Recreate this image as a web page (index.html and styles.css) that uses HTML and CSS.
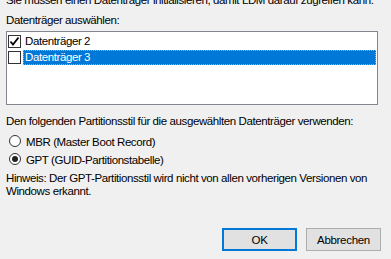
FILE: index.html
```html
<!DOCTYPE html>
<html lang="de">
<head>
    <meta charset="UTF-8">
    <meta name="viewport" content="width=device-width, initial-scale=1.0">
    <title>Datenträgerinitialisierung</title>
    <link rel="stylesheet" href="styles.css">
</head>
<body>
    <div class="dialog">
        <p class="intro">Sie müssen einen Datenträger initialisieren, damit LDM darauf zugreifen kann.</p>

        <p class="label">Datenträger auswählen:</p>
        <div class="listbox">
            <div class="item">
                <span class="check checked">
                    <svg width="11" height="11" viewBox="0 0 11 11"><path d="M1.5 5.5 L4 8.5 L9.5 1.5" fill="none" stroke="#000" stroke-width="1.8"/></svg>
                </span>
                <span class="item-text">Datenträger 2</span>
            </div>
            <div class="item">
                <span class="check"></span>
                <span class="item-text selected">Datenträger 3</span>
            </div>
        </div>

        <p class="label style-label">Den folgenden Partitionsstil für die ausgewählten Datenträger verwenden:</p>
        <div class="radios">
            <div class="radio-row"><span class="radio"></span>MBR (Master Boot Record)</div>
            <div class="radio-row"><span class="radio on"></span>GPT (GUID-Partitionstabelle)</div>
        </div>
        <p class="hint">Hinweis: Der GPT-Partitionsstil wird nicht von allen vorherigen Versionen von Windows erkannt.</p>

        <div class="buttons">
            <button class="btn default">OK</button>
            <button class="btn">Abbrechen</button>
        </div>
    </div>
</body>
</html>
```

FILE: styles.css
```css
body {
    margin: 0;
    background: #f0f0f0;
    color: #000;
    font-family: "Liberation Sans", Arial, sans-serif;
    font-size: 11.5px;
    letter-spacing: -0.4px;
    line-height: 13px;
    overflow: hidden;
}
.dialog {
    padding: 0 10px 0 6px;
}
p {
    margin: 0;
}
.intro {
    margin-top: -6px;
    white-space: nowrap;
}
.label {
    margin-top: 7px;
}
.listbox {
    margin-top: 4px;
    width: 370px;
    height: 71px;
    border: 1px solid #828790;
    background: #fff;
    padding-top: 1px;
    box-sizing: content-box;
}
.item {
    display: flex;
    align-items: center;
    height: 16px;
}
.check {
    width: 11px;
    height: 11px;
    margin-left: 1px;
    border: 1px solid #333;
    background: #fff;
    display: flex;
    align-items: center;
    justify-content: center;
}
.item-text {
    margin-left: 2px;
    padding-left: 2px;
    flex: 1;
    height: 15px;
    line-height: 15px;
    margin-right: 1px;
    box-sizing: border-box;
}
.selected {
    background: #0078d7;
    color: #fff;
    outline: 1px dotted #f0a040;
    outline-offset: -1px;
}
.style-label {
    margin-top: 10px;
}
.radios {
    margin-top: 8px;
    display: flex;
    flex-direction: column;
    gap: 5px;
}
.radio-row {
    display: flex;
    align-items: flex-start;
    padding-left: 3px;
}
.radio {
    width: 10px;
    height: 10px;
    margin-top: -1px;
    margin-right: 5px;
    border: 1px solid #333;
    border-radius: 50%;
    background: #fff;
    position: relative;
}
.radio.on::after {
    content: "";
    position: absolute;
    left: 2px;
    top: 2px;
    width: 6px;
    height: 6px;
    border-radius: 50%;
    background: #222;
}
.hint {
    margin-top: 5px;
    width: 372px;
}
.buttons {
    margin-top: 30px;
    display: flex;
    justify-content: flex-end;
    gap: 9px;
}
.btn {
    width: 75px;
    height: 23px;
    background: #e1e1e1;
    border: 1px solid #adadad;
    font-family: inherit;
    font-size: 11.5px;
    letter-spacing: -0.3px;
    color: #000;
    padding: 0;
}
.btn.default {
    border: 2px solid #0078d7;
}
```
